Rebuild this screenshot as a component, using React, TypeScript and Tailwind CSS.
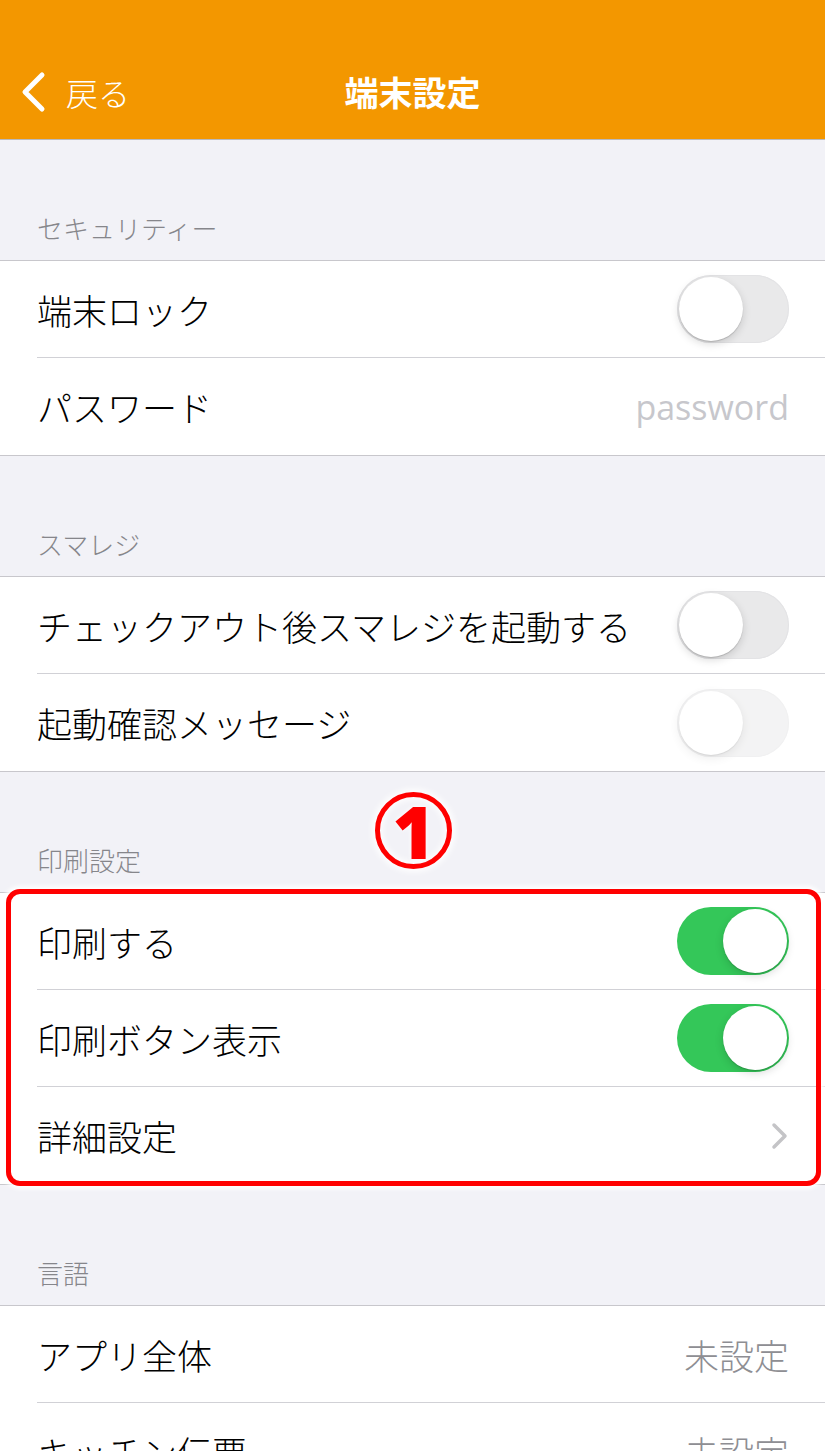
import React from 'react';
import clsx from 'clsx';

type Row = {
  label: string;
  toggle?: 'on' | 'off' | 'disabled';
  value?: string;
  placeholder?: string;
  chevron?: boolean;
};

type Section = {
  title: string;
  rows: Row[];
  highlight?: boolean;
};

const sections: Section[] = [
  {
    title: 'セキュリティー',
    rows: [
      { label: '端末ロック', toggle: 'off' },
      { label: 'パスワード', placeholder: 'password' },
    ],
  },
  {
    title: 'スマレジ',
    rows: [
      { label: 'チェックアウト後スマレジを起動する', toggle: 'off' },
      { label: '起動確認メッセージ', toggle: 'disabled' },
    ],
  },
  {
    title: '印刷設定',
    highlight: true,
    rows: [
      { label: '印刷する', toggle: 'on' },
      { label: '印刷ボタン表示', toggle: 'on' },
      { label: '詳細設定', chevron: true },
    ],
  },
  {
    title: '言語',
    rows: [
      { label: 'アプリ全体', value: '未設定' },
      { label: 'キッチン伝票', value: '未設定' },
    ],
  },
];

function Toggle({ state }: { state: 'on' | 'off' | 'disabled' }) {
  const on = state === 'on';
  return (
    <div
      className={clsx(
        'flex h-[68px] w-[112px] shrink-0 items-center rounded-full p-[2px]',
        on ? 'justify-end bg-[#34c759]' : 'justify-start bg-[#e9e9ea] shadow-[inset_0_0_0_1px_#e3e3e5]',
        state === 'disabled' && 'opacity-50'
      )}
    >
      <div className="h-[64px] w-[64px] rounded-full bg-white shadow-[0_3px_8px_rgba(0,0,0,0.15),0_1px_1px_rgba(0,0,0,0.16)]" />
    </div>
  );
}

function Chevron() {
  return (
    <svg width="18" height="28" viewBox="0 0 18 28" className="shrink-0">
      <polyline points="3,3 14,14 3,25" fill="none" stroke="#c4c4c7" strokeWidth="3.5" strokeLinecap="round" strokeLinejoin="round" />
    </svg>
  );
}

function SettingRow({ row, last }: { row: Row; last: boolean }) {
  return (
    <div className="pl-[37px]">
      <div
        className={clsx(
          'flex h-[97px] items-center justify-between pr-[36px]',
          !last && 'border-b border-[#d1d1d6]'
        )}
      >
        <span className="text-[35px] font-light leading-none text-black">{row.label}</span>
        {row.toggle && <Toggle state={row.toggle} />}
        {row.placeholder && (
          <span className="font-['Open_Sans',sans-serif] text-[34px] leading-none text-[#c7c7cc]">{row.placeholder}</span>
        )}
        {row.value && <span className="text-[35px] font-light leading-none text-[#8e8e93]">{row.value}</span>}
        {row.chevron && <Chevron />}
      </div>
    </div>
  );
}

export default function App() {
  return (
    <div className="h-[1451px] overflow-hidden bg-[#f2f2f7] font-['Noto_Sans_CJK_JP',sans-serif]">
      {/* nav bar */}
      <header className="flex h-[140px] flex-col justify-end border-b border-[#b9b9bd] bg-[#f39700]">
        <div className="grid h-[94px] grid-cols-[1fr_auto_1fr] items-center">
          <div className="flex items-center gap-[18px] pl-[20px] text-white">
            <svg width="28" height="42" viewBox="0 0 28 42">
              <polyline points="22,4 5,21 22,38" fill="none" stroke="#ffffff" strokeWidth="5" strokeLinecap="round" strokeLinejoin="round" />
            </svg>
            <span className="text-[32px] font-light leading-none">戻る</span>
          </div>
          <h1 className="text-[34px] font-bold leading-none text-white">端末設定</h1>
          <div />
        </div>
      </header>

      {sections.map((section) => (
        <section key={section.title}>
          <div className="relative pb-[16px] pl-[37px] pt-[72px]">
            <span className="block text-[26px] font-light leading-[32px] text-[#86868b]">{section.title}</span>
            {section.highlight && (
              <div className="absolute left-[375px] top-[20px] flex h-[77px] w-[77px] items-center justify-center rounded-full border-[5px] border-[#ff0000] shadow-[0_0_6px_3px_rgba(255,255,255,0.95),inset_0_0_6px_2px_rgba(255,255,255,0.95)]">
                <span className="font-['Noto_Sans',sans-serif] text-[72px] font-black leading-none text-[#ff0000] [text-shadow:0_0_5px_#fff]">1</span>
              </div>
            )}
          </div>
          <div className="relative border-y border-[#c8c7cc] bg-white">
            {section.rows.map((row, i) => (
              <SettingRow key={row.label} row={row} last={i === section.rows.length - 1} />
            ))}
            {section.highlight && (
              <div className="pointer-events-none absolute -bottom-[2px] -top-[4px] left-[6px] right-[4px] rounded-[14px] border-[5px] border-[#ff0000] shadow-[0_0_4px_3px_rgba(255,255,255,0.95)]" />
            )}
          </div>
        </section>
      ))}
    </div>
  );
}
